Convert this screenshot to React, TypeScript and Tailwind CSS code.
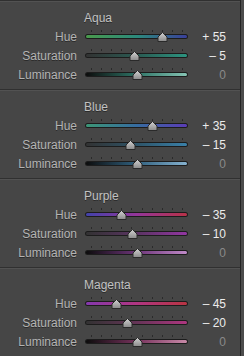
import React from 'react';

type Row = { label: string; value: number; from: string; via?: string; to: string };
type Section = { title: string; rows: Row[] };

const sections: Section[] = [
  {
    title: 'Aqua',
    rows: [
      { label: 'Hue', value: 55, from: '#4a9a4c', via: '#2c8a7c', to: '#3a3f9a' },
      { label: 'Saturation', value: -5, from: '#323232', via: '#2a5a52', to: '#2c9480' },
      { label: 'Luminance', value: 0, from: '#0c0c0c', via: '#2e7466', to: '#86c4b4' },
    ],
  },
  {
    title: 'Blue',
    rows: [
      { label: 'Hue', value: 35, from: '#3c9676', via: '#366ca0', to: '#5a3cb6' },
      { label: 'Saturation', value: -15, from: '#323232', via: '#2e5468', to: '#3a80a8' },
      { label: 'Luminance', value: 0, from: '#0c0c0c', via: '#30607e', to: '#86b2d0' },
    ],
  },
  {
    title: 'Purple',
    rows: [
      { label: 'Hue', value: -35, from: '#4242aa', via: '#94369a', to: '#b83248' },
      { label: 'Saturation', value: -10, from: '#323232', via: '#5a3462', to: '#9236a2' },
      { label: 'Luminance', value: 0, from: '#0c0c0c', via: '#6c3478', to: '#c08ac8' },
    ],
  },
  {
    title: 'Magenta',
    rows: [
      { label: 'Hue', value: -45, from: '#8438ae', via: '#b03682', to: '#b83442' },
      { label: 'Saturation', value: -20, from: '#323232', via: '#643456', to: '#ae3680' },
      { label: 'Luminance', value: 0, from: '#0c0c0c', via: '#76325c', to: '#c88aa8' },
    ],
  },
];

const ticks = [0, 1, 2, 3, 4, 5, 6, 7, 8, 9];

function formatValue(v: number) {
  if (v > 0) return `+ ${v}`;
  if (v < 0) return `– ${Math.abs(v)}`;
  return '0';
}

const Thumb = () => (
  <svg width="11" height="10" viewBox="0 0 11 10">
    <defs>
      <linearGradient id="thumbGrad" x1="0" y1="0" x2="0" y2="1">
        <stop offset="0" stopColor="#d2d2d2" />
        <stop offset="1" stopColor="#8a8a8a" />
      </linearGradient>
    </defs>
    <path d="M5.5 0.5 L10 5 L10 9.5 L1 9.5 L1 5 Z" fill="url(#thumbGrad)" stroke="#2a2a2a" strokeWidth="1" />
  </svg>
);

const Slider = ({ row }: { row: Row }) => {
  const bg = row.via
    ? `linear-gradient(to right, ${row.from}, ${row.via}, ${row.to})`
    : `linear-gradient(to right, ${row.from}, ${row.to})`;
  const pos = 52 + row.value * 0.455;
  return (
    <div className="relative w-[103px] h-[19px] flex items-center">
      {ticks.map((t) => (
        <div
          key={t}
          className="absolute top-[3px] w-px h-[2px] bg-[#2a2a2a]"
          style={{ left: 6 + t * 10.1 }}
        />
      ))}
      <div className="w-full h-[5px] rounded-full bg-[#1c1c1c] p-px">
        <div className="w-full h-full rounded-full" style={{ background: bg }} />
      </div>
      <div className="absolute top-[5px]" style={{ left: pos - 5.5 }}>
        <Thumb />
      </div>
    </div>
  );
};

export default function App() {
  return (
    <div
      className="flex w-[244px] h-[356px] bg-[#464646] overflow-hidden"
      style={{ fontFamily: '"Liberation Sans", Arial, sans-serif' }}
    >
      <div className="w-[240px] flex flex-col">
        {sections.map((s) => (
          <div key={s.title}>
            <div className="h-px bg-[#303030]" />
            <div className="h-px bg-[#525252]" />
            <div className="h-[87px] pt-[8px]">
              <div className="h-[16px] leading-[16px] pl-[84px] text-[12px] text-[#c2c2c2] [text-shadow:0_1px_0_#2a2a2a]">
                {s.title}
              </div>
              <div className="mt-px flex flex-col">
                {s.rows.map((r) => (
                  <div key={r.label} className="flex items-center h-[19px]">
                    <div className="w-[77px] text-right text-[12px] text-[#b4b4b4] [text-shadow:0_1px_0_#2a2a2a]">
                      {r.label}
                    </div>
                    <div className="ml-[8px]">
                      <Slider row={r} />
                    </div>
                    <div
                      className={`w-[38px] text-right text-[12px] ${
                        r.value === 0 ? 'text-[#8a8a8a]' : 'text-[#ececec]'
                      }`}
                    >
                      {formatValue(r.value)}
                    </div>
                  </div>
                ))}
              </div>
            </div>
          </div>
        ))}
      </div>
      <div className="w-px bg-[#242424]" />
      <div className="flex-1 bg-[#4c4c4c]" />
    </div>
  );
}
